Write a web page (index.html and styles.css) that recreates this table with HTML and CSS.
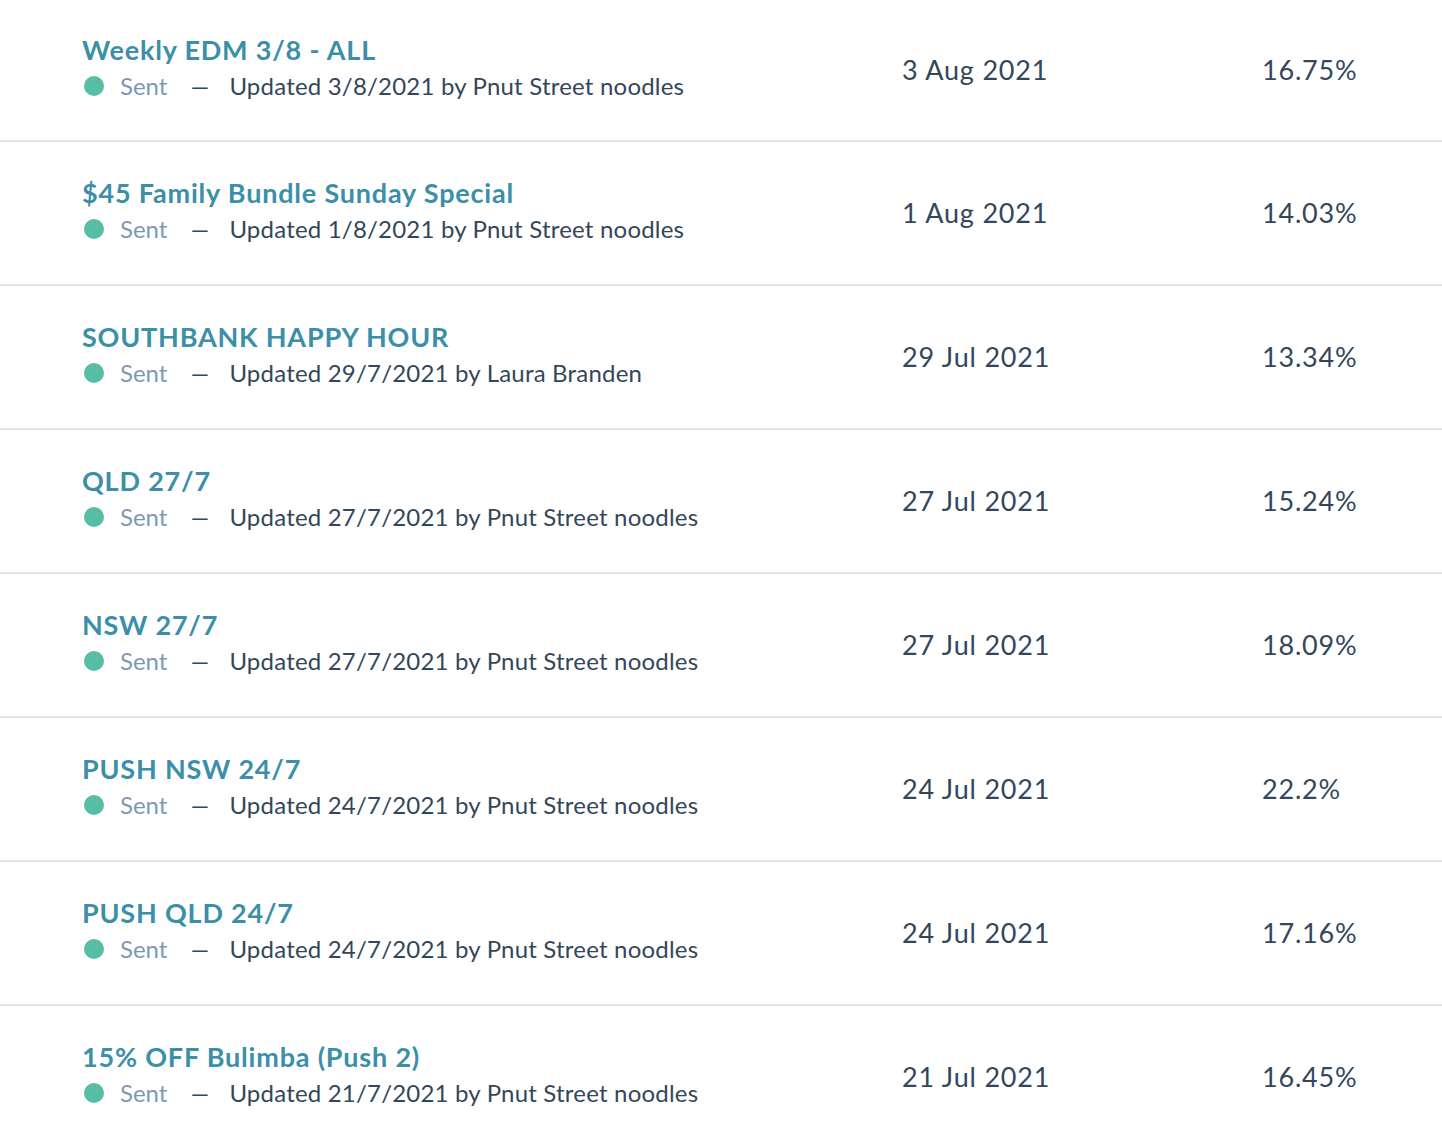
FILE: index.html
```html
<!DOCTYPE html>
<html>
<head>
<meta charset="utf-8">
<link rel="stylesheet" href="styles.css">
</head>
<body>
<div class="list">
  <div class="row">
    <div class="name"><div class="title">Weekly EDM 3/8 - ALL</div><div class="meta"><span class="dot"></span><span class="sent">Sent</span><span class="dash">–</span><span class="upd">Updated 3/8/2021 by Pnut Street noodles</span></div></div>
    <div class="date">3 Aug 2021</div><div class="pct">16.75%</div>
  </div>
  <div class="row">
    <div class="name"><div class="title">$45 Family Bundle Sunday Special</div><div class="meta"><span class="dot"></span><span class="sent">Sent</span><span class="dash">–</span><span class="upd">Updated 1/8/2021 by Pnut Street noodles</span></div></div>
    <div class="date">1 Aug 2021</div><div class="pct">14.03%</div>
  </div>
  <div class="row">
    <div class="name"><div class="title">SOUTHBANK HAPPY HOUR</div><div class="meta"><span class="dot"></span><span class="sent">Sent</span><span class="dash">–</span><span class="upd">Updated 29/7/2021 by Laura Branden</span></div></div>
    <div class="date">29 Jul 2021</div><div class="pct">13.34%</div>
  </div>
  <div class="row">
    <div class="name"><div class="title">QLD 27/7</div><div class="meta"><span class="dot"></span><span class="sent">Sent</span><span class="dash">–</span><span class="upd">Updated 27/7/2021 by Pnut Street noodles</span></div></div>
    <div class="date">27 Jul 2021</div><div class="pct">15.24%</div>
  </div>
  <div class="row">
    <div class="name"><div class="title">NSW 27/7</div><div class="meta"><span class="dot"></span><span class="sent">Sent</span><span class="dash">–</span><span class="upd">Updated 27/7/2021 by Pnut Street noodles</span></div></div>
    <div class="date">27 Jul 2021</div><div class="pct">18.09%</div>
  </div>
  <div class="row">
    <div class="name"><div class="title">PUSH NSW 24/7</div><div class="meta"><span class="dot"></span><span class="sent">Sent</span><span class="dash">–</span><span class="upd">Updated 24/7/2021 by Pnut Street noodles</span></div></div>
    <div class="date">24 Jul 2021</div><div class="pct">22.2%</div>
  </div>
  <div class="row">
    <div class="name"><div class="title">PUSH QLD 24/7</div><div class="meta"><span class="dot"></span><span class="sent">Sent</span><span class="dash">–</span><span class="upd">Updated 24/7/2021 by Pnut Street noodles</span></div></div>
    <div class="date">24 Jul 2021</div><div class="pct">17.16%</div>
  </div>
  <div class="row">
    <div class="name"><div class="title">15% OFF Bulimba (Push 2)</div><div class="meta"><span class="dot"></span><span class="sent">Sent</span><span class="dash">–</span><span class="upd">Updated 21/7/2021 by Pnut Street noodles</span></div></div>
    <div class="date">21 Jul 2021</div><div class="pct">16.45%</div>
  </div>
</div>
</body>
</html>
```
FILE: styles.css
```css
html, body {
  margin: 0;
  padding: 0;
  background: #ffffff;
}
body {
  font-family: Lato, "Open Sans", sans-serif;
  color: #33475b;
  overflow: hidden;
}
.list {
  display: flex;
  flex-direction: column;
}
.row {
  height: 142px;
  border-bottom: 2px solid #dfe3eb;
  display: grid;
  grid-template-columns: 820px 360px 1fr;
  align-items: center;
  padding-left: 82px;
}
.row:first-child {
  height: 140px;
}
.name {
  display: flex;
  flex-direction: column;
  gap: 4px;
  margin-top: -4px;
}
.title {
  font-size: 27px;
  font-weight: 700;
  color: #3b8fa8;
  line-height: 32px;
  letter-spacing: 0.8px;
}
.meta {
  display: flex;
  align-items: center;
  font-size: 24px;
  line-height: 32px;
}
.dot {
  width: 20px;
  height: 20px;
  border-radius: 50%;
  background: #56bea6;
  margin-left: 2px;
  margin-right: 16px;
}
.sent {
  color: #7c98b6;
  margin-right: 24px;
}
.dash {
  display: inline-block;
  transform: scaleX(1.6);
  margin-left: 2px;
  margin-right: 22px;
}
.upd {
  letter-spacing: 0.2px;
}
.date, .pct {
  font-size: 27px;
  letter-spacing: 0.8px;
  margin-top: -2px;
}
```
